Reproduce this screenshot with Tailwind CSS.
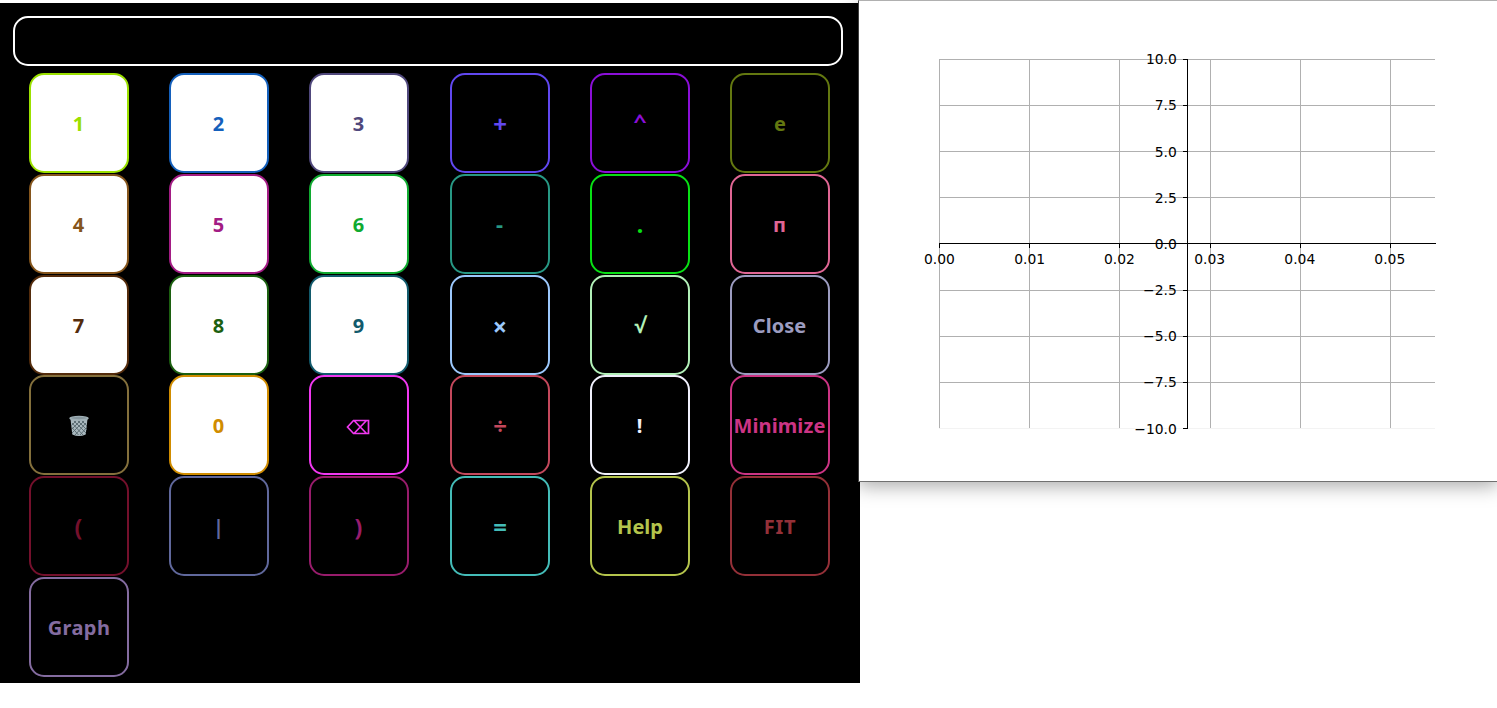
<!DOCTYPE html>
<html lang="en"><head><meta charset="utf-8"><title>Calculator</title>
<script src="https://cdn.jsdelivr.net/npm/@tailwindcss/browser@4"></script></head>
<body class="relative h-[708px] w-[1497px] overflow-hidden bg-white pt-[3px] font-['Noto_Sans','Open_Sans',sans-serif]">
<main class="h-[680px] w-[860px] bg-black pt-[13px]">
<div class="ml-[13px] h-[50px] w-[830px] rounded-[15px] border-2 border-white"></div>
<div class="mt-[7px] ml-[29px] grid grid-cols-[140px_140px_141px_140px_140px_100px] grid-rows-[101px_101px_100px_101px_101px_100px] text-[20px] leading-[28px] font-bold [&>button]:size-[100px] [&>button]:rounded-[15px] [&>button]:border-2 [&>button]:border-current [&>button]:pt-[2px] [&>button]:pr-px [&>button]:flex [&>button]:items-center [&>button]:justify-center">
<button class="bg-white text-[#9be000]">1</button>
<button class="bg-white text-[#1460bc]">2</button>
<button class="bg-white text-[#50487c]">3</button>
<button class="text-[#6148f0]"><span class="pl-px text-[24px]">+</span></button>
<button class="text-[#8b0fd8]"><span class="mb-[7px] ml-px scale-y-75 text-[23px]">^</span></button>
<button class="text-[#637810]"><span class="pl-px">e</span></button>
<button class="bg-white text-[#85551c]">4</button>
<button class="bg-white text-[#a31c84]">5</button>
<button class="bg-white text-[#10aa30]">6</button>
<button class="text-[#279884]"><span class="pb-[4px] text-[22px]">-</span></button>
<button class="text-[#08e014]"><span class="pb-[2px] pl-px text-[23px]">.</span></button>
<button class="text-[#e06694]">п</button>
<button class="bg-white text-[#542c0c]">7</button>
<button class="bg-white text-[#1c6010]">8</button>
<button class="bg-white text-[#125a6c]">9</button>
<button class="text-[#9cc8fc]"><span class="pl-px text-[25px]">×</span></button>
<button class="text-[#b2f0b8]"><span class="pb-[2px] pl-px text-[21px]">√</span></button>
<button class="text-[#9c9cc0]"><span>Close</span></button>
<button class="text-[#84703c]" aria-label="Clear"><svg class="mb-px h-[22px] w-[22px]" viewBox="0 0 22 22"><path d="M2.5 4 4.3 19.5Q11 22.5 17.7 19.5L19.5 4Z" fill="#a9b8be"/><path d="m4 8 11 12M3.5 12l7 8M6 6l12 12M10 6l9 9M14 6l5 5M18 8 7 20M19 12l-7 8M16 6 4 18M12 6l-8 8M8 6 3.5 10.5" stroke="#56666d" stroke-width=".9" fill="none"/><ellipse cx="11" cy="3.3" rx="9.8" ry="2.6" fill="#a0b0b6"/><ellipse cx="11" cy="3" rx="7.8" ry="1.2" fill="#87979e"/></svg></button>
<button class="bg-white text-[#d08c00]">0</button>
<button class="text-[#f038f0]" aria-label="Backspace"><svg class="mr-px mt-px h-[16px] w-[24px]" viewBox="0 0 24 16" fill="none" stroke="currentColor" stroke-width="1.7"><path d="M1.5 8 7.5 1.5H22.5V14.5H7.5ZM8 1.5 20.5 14.5M20.5 1.5 8 14.5"/></svg></button>
<button class="text-[#c4485c]"><span class="pl-px text-[24px]">÷</span></button>
<button class="text-[#f0f0fc]">!</button>
<button class="text-[#cc3484]"><span class="tracking-[0.1px]">Minimize</span></button>
<button class="text-[#74102c]"><span class="text-[23px]">(</span></button>
<button class="text-[#60689c]">|</button>
<button class="text-[#981c6c]"><span class="text-[23px]">)</span></button>
<button class="text-[#44bcb8]"><span class="pl-px text-[24px]">=</span></button>
<button class="text-[#b4c44c]"><span class="pl-px">Help</span></button>
<button class="text-[#943038]"><span class="pl-px tracking-[0.8px]">FIT</span></button>
<button class="text-[#846ca0]"><span class="pl-px tracking-[0.4px]">Graph</span></button>
</div></main>
<section class="absolute top-0 left-[858px] h-[482px] w-[640px] border border-[#707070] border-l-[#404040] border-t-[#b0b0b0] bg-white shadow-[0_4px_18px_rgba(0,0,0,0.34)]">
<svg class="block h-[480px] w-[638px]" viewBox="859 1 638 480" font-family="DejaVu Sans" font-size="13.89">
<path d="M939.5 59V428M1029.5 59V428M1119.5 59V428M1210.5 59V428M1300.5 59V428M1390.5 59V428M939 59.5H1435M939 105.5H1435M939 151.5H1435M939 197.5H1435M939 290.5H1435M939 336.5H1435M939 382.5H1435" stroke="#b0b0b0" fill="none"/>
<path d="M939 428.5H1435" stroke="#f3f3f3"/>
<path d="M939 243.5H1436M1187.5 59V429M939.5 243V248M1029.5 243V248M1119.5 243V248M1210.5 243V248M1300.5 243V248M1390.5 243V248M1183 59.5H1188M1183 105.5H1188M1183 151.5H1188M1183 197.5H1188M1183 243.5H1188M1183 290.5H1188M1183 336.5H1188M1183 382.5H1188M1183 428.5H1188" stroke="#000" fill="none"/>
<g text-anchor="middle"><text x="939.5" y="264">0.00</text><text x="1029.7" y="264">0.01</text><text x="1119.4" y="264">0.02</text><text x="1209.6" y="264">0.03</text><text x="1299.8" y="264">0.04</text><text x="1389.8" y="264">0.05</text></g>
<g text-anchor="end"><text x="1176.8" y="64">10.0</text><text x="1176.8" y="110">7.5</text><text x="1176.8" y="157">5.0</text><text x="1176.8" y="203">2.5</text><text x="1176.8" y="249">0.0</text><text x="1176.8" y="295">−2.5</text><text x="1176.8" y="341">−5.0</text><text x="1176.8" y="387">−7.5</text><text x="1176.8" y="434">−10.0</text></g>
</svg></section>
</body></html>
